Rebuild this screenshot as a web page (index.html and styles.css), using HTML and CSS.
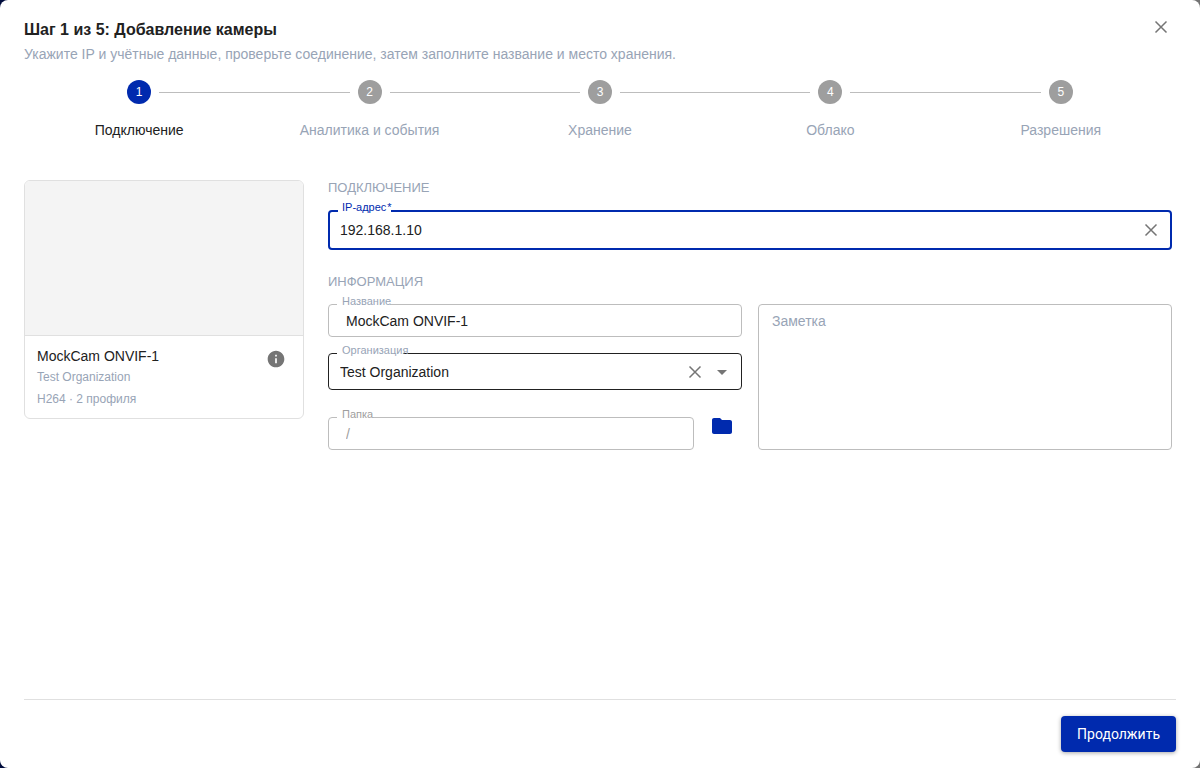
FILE: index.html
```html
<!DOCTYPE html>
<html lang="ru">
<head>
<meta charset="utf-8">
<meta name="viewport" content="width=device-width, initial-scale=1">
<title>Добавление камеры</title>
<link rel="stylesheet" href="styles.css">
</head>
<body>
<main class="dialog" role="dialog" aria-labelledby="dialog-title">
  <header class="dialog-header">
    <div>
      <h1 class="dialog-title" id="dialog-title">Шаг 1 из 5: Добавление камеры</h1>
      <p class="dialog-subtitle">Укажите IP и учётные данные, проверьте соединение, затем заполните название и место хранения.</p>
    </div>
    <button class="icon-button" type="button" aria-label="Закрыть">
      <svg class="icon" viewBox="0 0 20 20"><path d="M4.500 4.500l11 11M15.500 4.500l-11 11"/></svg>
    </button>
  </header>

  <ol class="stepper">
    <li class="step step-active" aria-current="step"><span class="step-number">1</span><span class="step-label">Подключение</span></li>
    <li class="step"><span class="step-number">2</span><span class="step-label">Аналитика и события</span></li>
    <li class="step"><span class="step-number">3</span><span class="step-label">Хранение</span></li>
    <li class="step"><span class="step-number">4</span><span class="step-label">Облако</span></li>
    <li class="step"><span class="step-number">5</span><span class="step-label">Разрешения</span></li>
  </ol>

  <div class="content">
    <aside class="camera-card">
      <div class="camera-preview"></div>
      <div class="camera-details">
        <div>
          <h2 class="camera-name">MockCam ONVIF-1</h2>
          <p class="camera-meta">Test Organization</p>
          <p class="camera-meta">H264 · 2 профиля</p>
        </div>
        <button class="icon-button" type="button" aria-label="Сведения о камере">
          <svg class="icon icon-solid" viewBox="0 0 24 24"><path d="M12 2C6.480 2 2 6.480 2 12s4.480 10 10 10 10-4.480 10-10S17.520 2 12 2zm1 15h-2v-6h2v6zm0-8h-2V7h2v2z"/></svg>
        </button>
      </div>
    </aside>

    <form class="form">
      <h2 class="section-title">Подключение</h2>
      <div class="field field-active">
        <label class="field-label" for="ip">IP-адрес&#8202;*</label>
        <input class="field-input" id="ip" type="text" value="192.168.1.10">
        <button class="icon-button" type="button" aria-label="Очистить адрес">
          <svg class="icon" viewBox="0 0 20 20"><path d="M4.500 4.500l11 11M15.500 4.500l-11 11"/></svg>
        </button>
        <fieldset class="outline" aria-hidden="true"><legend class="notch"></legend></fieldset>
      </div>

      <h2 class="section-title section-next">Информация</h2>
      <div class="info-grid">
        <div class="info-column">
          <div class="field field-compact">
            <label class="field-label" for="name">Название</label>
            <input class="field-input" id="name" type="text" value="MockCam ONVIF-1">
            <fieldset class="outline" aria-hidden="true"><legend class="notch"></legend></fieldset>
          </div>
          <div class="field field-select">
            <label class="field-label" for="organization">Организация</label>
            <select class="field-input" id="organization"><option>Test Organization</option></select>
            <button class="icon-button" type="button" aria-label="Очистить организацию">
              <svg class="icon" viewBox="0 0 20 20"><path d="M4.500 4.500l11 11M15.500 4.500l-11 11"/></svg>
            </button>
            <svg class="select-arrow" viewBox="0 0 24 24" aria-hidden="true"><path d="M7 10l5 5 5-5z"/></svg>
            <fieldset class="outline" aria-hidden="true"><legend class="notch notch-long"></legend></fieldset>
          </div>
          <div class="folder-row">
            <div class="field field-compact field-disabled">
              <label class="field-label" for="folder">Папка</label>
              <input class="field-input" id="folder" type="text" value="/" disabled>
              <fieldset class="outline" aria-hidden="true"><legend class="notch notch-short"></legend></fieldset>
            </div>
            <button class="folder-button" type="button" aria-label="Выбрать папку">
              <svg class="folder-icon" viewBox="0 0 24 24"><path d="M10 4H4c-1.100 0-1.990.9-1.990 2L2 18c0 1.100.9 2 2 2h16c1.100 0 2-.9 2-2V8c0-1.100-.9-2-2-2h-8l-2-2z"/></svg>
            </button>
          </div>
        </div>
        <textarea class="note" aria-label="Заметка" placeholder="Заметка"></textarea>
      </div>
    </form>
  </div>

  <footer class="dialog-footer">
    <button class="submit" type="button">Продолжить</button>
  </footer>
</main>
</body>
</html>
```
FILE: styles.css
```css
:root {
  --primary: #002aae;
  --text: #212121;
  --muted: #98a4b6;
  --icon: #757575;
  --line: #bdbdbd;
  --divider: #e0e0e0;
}

* { box-sizing: border-box; }

body {
  margin: 0;
  background: linear-gradient(90deg, #000c3c 50%, #737373 50%);
  color: var(--text);
  font: 14px/20px "Liberation Sans", Arial, sans-serif;
}

h1, h2, p, ol { margin: 0; padding: 0; }

button, input, select, textarea { font: inherit; color: inherit; }

button {
  border: 0;
  background: none;
  padding: 0;
  cursor: pointer;
}

.dialog {
  display: flex;
  flex-direction: column;
  min-height: 100vh;
  padding: 16px 24px;
  border-radius: 8px;
  background: #fff;
}

.dialog-header {
  display: flex;
  justify-content: space-between;
  align-items: flex-start;
}

.dialog-title {
  font-size: 16px;
  line-height: 28px;
  font-weight: 700;
}

.dialog-subtitle {
  line-height: 20px;
  color: var(--muted);
}

.icon-button {
  display: flex;
  padding: 1px 5px;
}

.icon {
  width: 20px;
  height: 20px;
  fill: none;
  stroke: var(--icon);
  stroke-width: 1.5;
}

.icon-solid {
  fill: var(--icon);
  stroke: none;
}

.stepper {
  display: grid;
  grid-template-columns: repeat(5, 1fr);
  margin-top: 16px;
  list-style: none;
}

.step {
  position: relative;
  display: flex;
  flex-direction: column;
  align-items: center;
  gap: 16px;
  color: var(--muted);
}

.step + .step::before {
  content: "";
  position: absolute;
  top: 12px;
  left: calc(-50% + 20px);
  right: calc(50% + 20px);
  border-top: 1px solid var(--line);
}

.step-number {
  width: 24px;
  height: 24px;
  border-radius: 50%;
  background: #9e9e9e;
  color: #fff;
  font-size: 12px;
  line-height: 24px;
  text-align: center;
}

.step-active { color: var(--text); }
.step-active .step-number { background: var(--primary); }

.content {
  display: grid;
  grid-template-columns: 280px 1fr;
  gap: 24px;
  align-items: start;
  flex: 1;
  padding: 40px 4px 24px 0;
}

.camera-card {
  border: 1px solid var(--divider);
  border-radius: 6px;
  overflow: hidden;
}

.camera-preview {
  height: 155px;
  border-bottom: 1px solid var(--divider);
  background: #f4f4f4;
}

.camera-details {
  display: flex;
  justify-content: space-between;
  align-items: flex-start;
  padding: 10px 12px 8px;
}

.camera-details .icon-button { padding: 3px 5px; }

.camera-name {
  font-size: 14px;
  line-height: 20px;
  font-weight: 400;
}

.camera-meta {
  font-size: 12px;
  line-height: 22px;
  color: var(--muted);
}

.section-title {
  margin-bottom: 14px;
  font-size: 13px;
  line-height: 16px;
  font-weight: 400;
  text-transform: uppercase;
  color: var(--muted);
}

.section-next { margin-top: 24px; }

.field {
  position: relative;
  display: flex;
  align-items: center;
  height: 40px;
  padding: 0 6px 0 12px;
}

.field-compact {
  height: 33px;
  padding: 0 18px;
}

.field-select {
  height: 37px;
  padding-right: 8px;
}

.field-input {
  flex: 1;
  min-width: 0;
  height: 100%;
  padding: 0;
  border: 0;
  outline: 0;
  background: none;
  appearance: none;
}

.field-label {
  position: absolute;
  top: -9px;
  left: 14px;
  z-index: 1;
  font-size: 11px;
  line-height: 12px;
  color: var(--muted);
}

.outline {
  position: absolute;
  inset: -5px 0 0;
  min-width: 0;
  margin: 0;
  padding: 0 8px;
  border: 1px solid var(--line);
  border-radius: 4px;
  pointer-events: none;
}

.notch {
  width: 53px;
  height: 11px;
  padding: 0;
}

.notch-long { width: 66px; }
.notch-short { width: 36px; }

.field-active .outline {
  border-width: 2px;
  border-color: var(--primary);
}

.field-active .field-label { color: var(--primary); }
.field-select .outline { border-color: var(--text); }
.field-disabled .field-label,
.field-disabled .field-input { color: #9e9e9e; }

.select-arrow {
  width: 24px;
  height: 24px;
  fill: var(--icon);
  pointer-events: none;
}

.info-grid {
  display: grid;
  grid-template-columns: 1fr 1fr;
  gap: 16px;
}

.info-column {
  display: flex;
  flex-direction: column;
  gap: 16px;
}

.folder-row {
  display: flex;
  align-items: flex-start;
  gap: 8px;
  padding-top: 11px;
}

.folder-row .field { flex: 1; }

.folder-button {
  display: flex;
  justify-content: center;
  width: 40px;
}

.folder-icon {
  width: 24px;
  height: 24px;
  margin-top: -3px;
  fill: var(--primary);
}

.note {
  height: 100%;
  padding: 6px 13px;
  border: 1px solid var(--line);
  border-radius: 4px;
  outline: 0;
  resize: none;
}

.note::placeholder { color: var(--muted); }

.dialog-footer {
  display: flex;
  justify-content: flex-end;
  padding-top: 16px;
  border-top: 1px solid var(--divider);
}

.submit {
  height: 36px;
  padding: 0 16px;
  border-radius: 4px;
  background: var(--primary);
  box-shadow: 0 1px 4px rgba(0, 0, 0, 0.35);
  color: #fff;
  font-family: Roboto, sans-serif;
}
```
